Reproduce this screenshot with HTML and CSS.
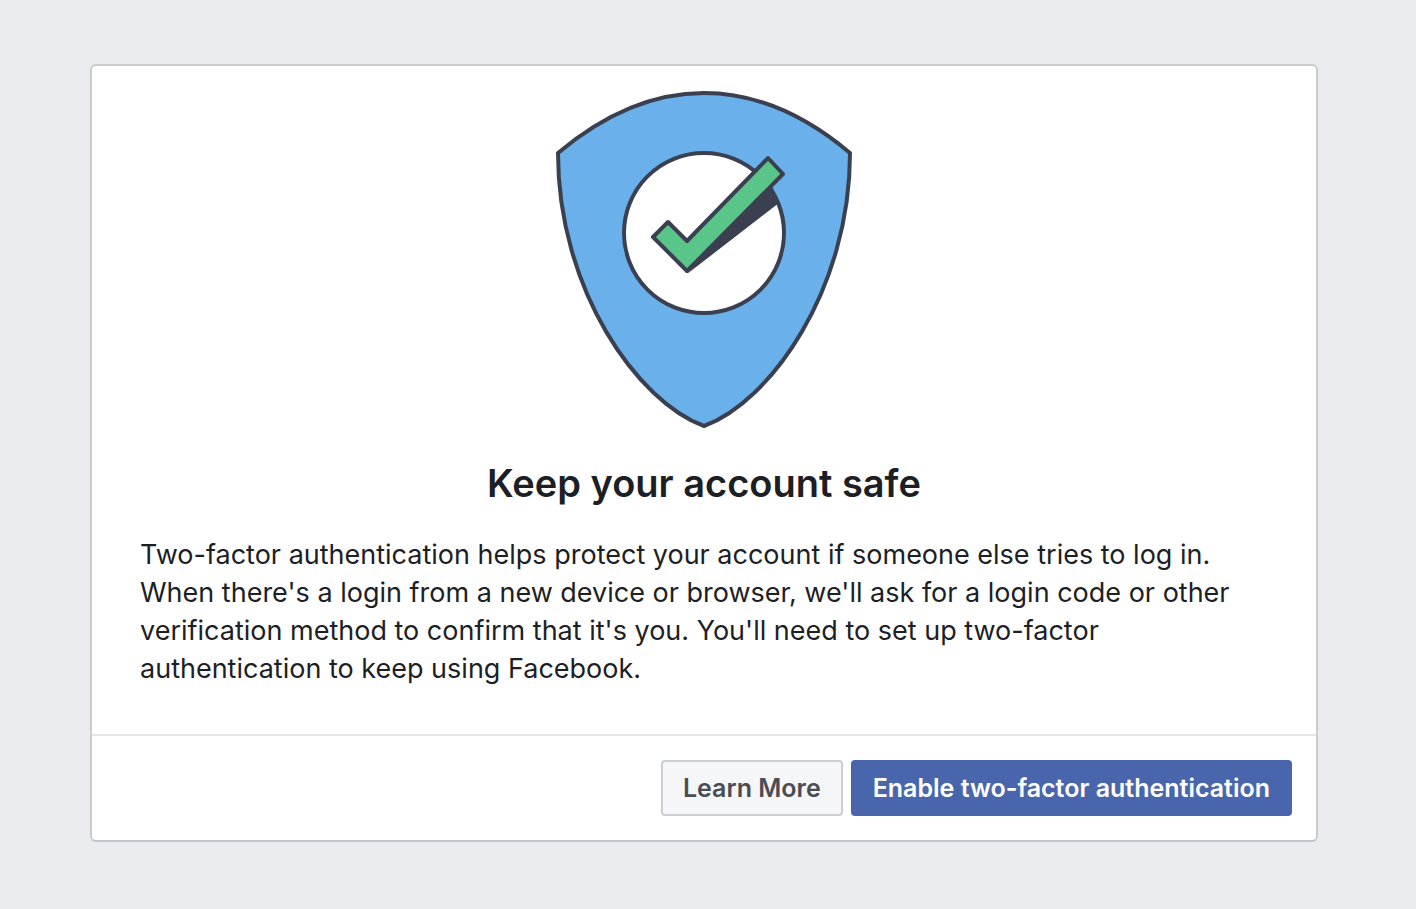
FILE: index.html
```html
<!DOCTYPE html>
<html lang="en">
<head>
<meta charset="utf-8">
<meta name="viewport" content="width=device-width, initial-scale=1">
<title>Keep your account safe</title>
<link rel="stylesheet" href="styles.css">
</head>
<body>
<main class="card">
  <section class="content">
    <svg class="shield" viewBox="0 0 300 340" aria-hidden="true">
      <path d="M4 63C48 26 98 3 150 3S252 26 296 63C296 200 216 312 150 336C84 312 4 200 4 63Z" fill="#6ab0ea" stroke="#3a4050" stroke-width="4" stroke-linejoin="round"/>
      <circle cx="150" cy="143" r="80" fill="#fff" stroke="#3a4050" stroke-width="4"/>
      <path d="M133 184L216 92L225 113Z" fill="#3a4050"/>
      <path d="M99 147L114 132L133 151L214 68L229 84L133 181Z" fill="#5ac588" stroke="#3a4050" stroke-width="4" stroke-linejoin="round"/>
    </svg>
    <h1 class="title">Keep your account safe</h1>
    <p class="description">Two-factor authentication helps protect your account if someone else tries to log in. When there's a login from a new device or browser, we'll ask for a login code or other verification method to confirm that it's you. You'll need to set up two-factor authentication to keep using Facebook.</p>
  </section>
  <footer class="actions">
    <button class="button secondary" type="button">Learn More</button>
    <button class="button primary" type="button">Enable two-factor authentication</button>
  </footer>
</main>
</body>
</html>
```
FILE: styles.css
```css
* { box-sizing: border-box; }
body {
  margin: 0;
  padding: 64px 98px 64px 90px;
  background: #e9ebee;
  color: #1d1f24;
  font-family: Inter, "Liberation Sans", sans-serif;
}
.card {
  background: #fff;
  border: 2px solid #cbccd0;
  border-bottom-color: #c3c4c9;
  border-radius: 6px;
}
.content {
  display: flex;
  flex-direction: column;
  padding: 24px 48px 46px;
}
.shield {
  align-self: center;
  width: 300px;
  height: 340px;
}
.title {
  margin: 28px 0;
  font-size: 38px;
  line-height: 50px;
  font-weight: 600;
  text-align: center;
}
.description {
  margin: 0;
  font-size: 27px;
  line-height: 38px;
}
.actions {
  display: flex;
  flex-wrap: wrap;
  justify-content: flex-end;
  gap: 8px;
  padding: 24px;
  border-top: 2px solid #e5e5e7;
}
.button {
  padding: 0 20px;
  border: 2px solid #ccced4;
  border-radius: 4px;
  background: #f5f6f8;
  color: #4b4c54;
  font-family: inherit;
  font-size: 25px;
  font-weight: 600;
  line-height: 52px;
}
.primary {
  border-color: #4966ad;
  background: #4966ad;
  color: #fff;
}
```
